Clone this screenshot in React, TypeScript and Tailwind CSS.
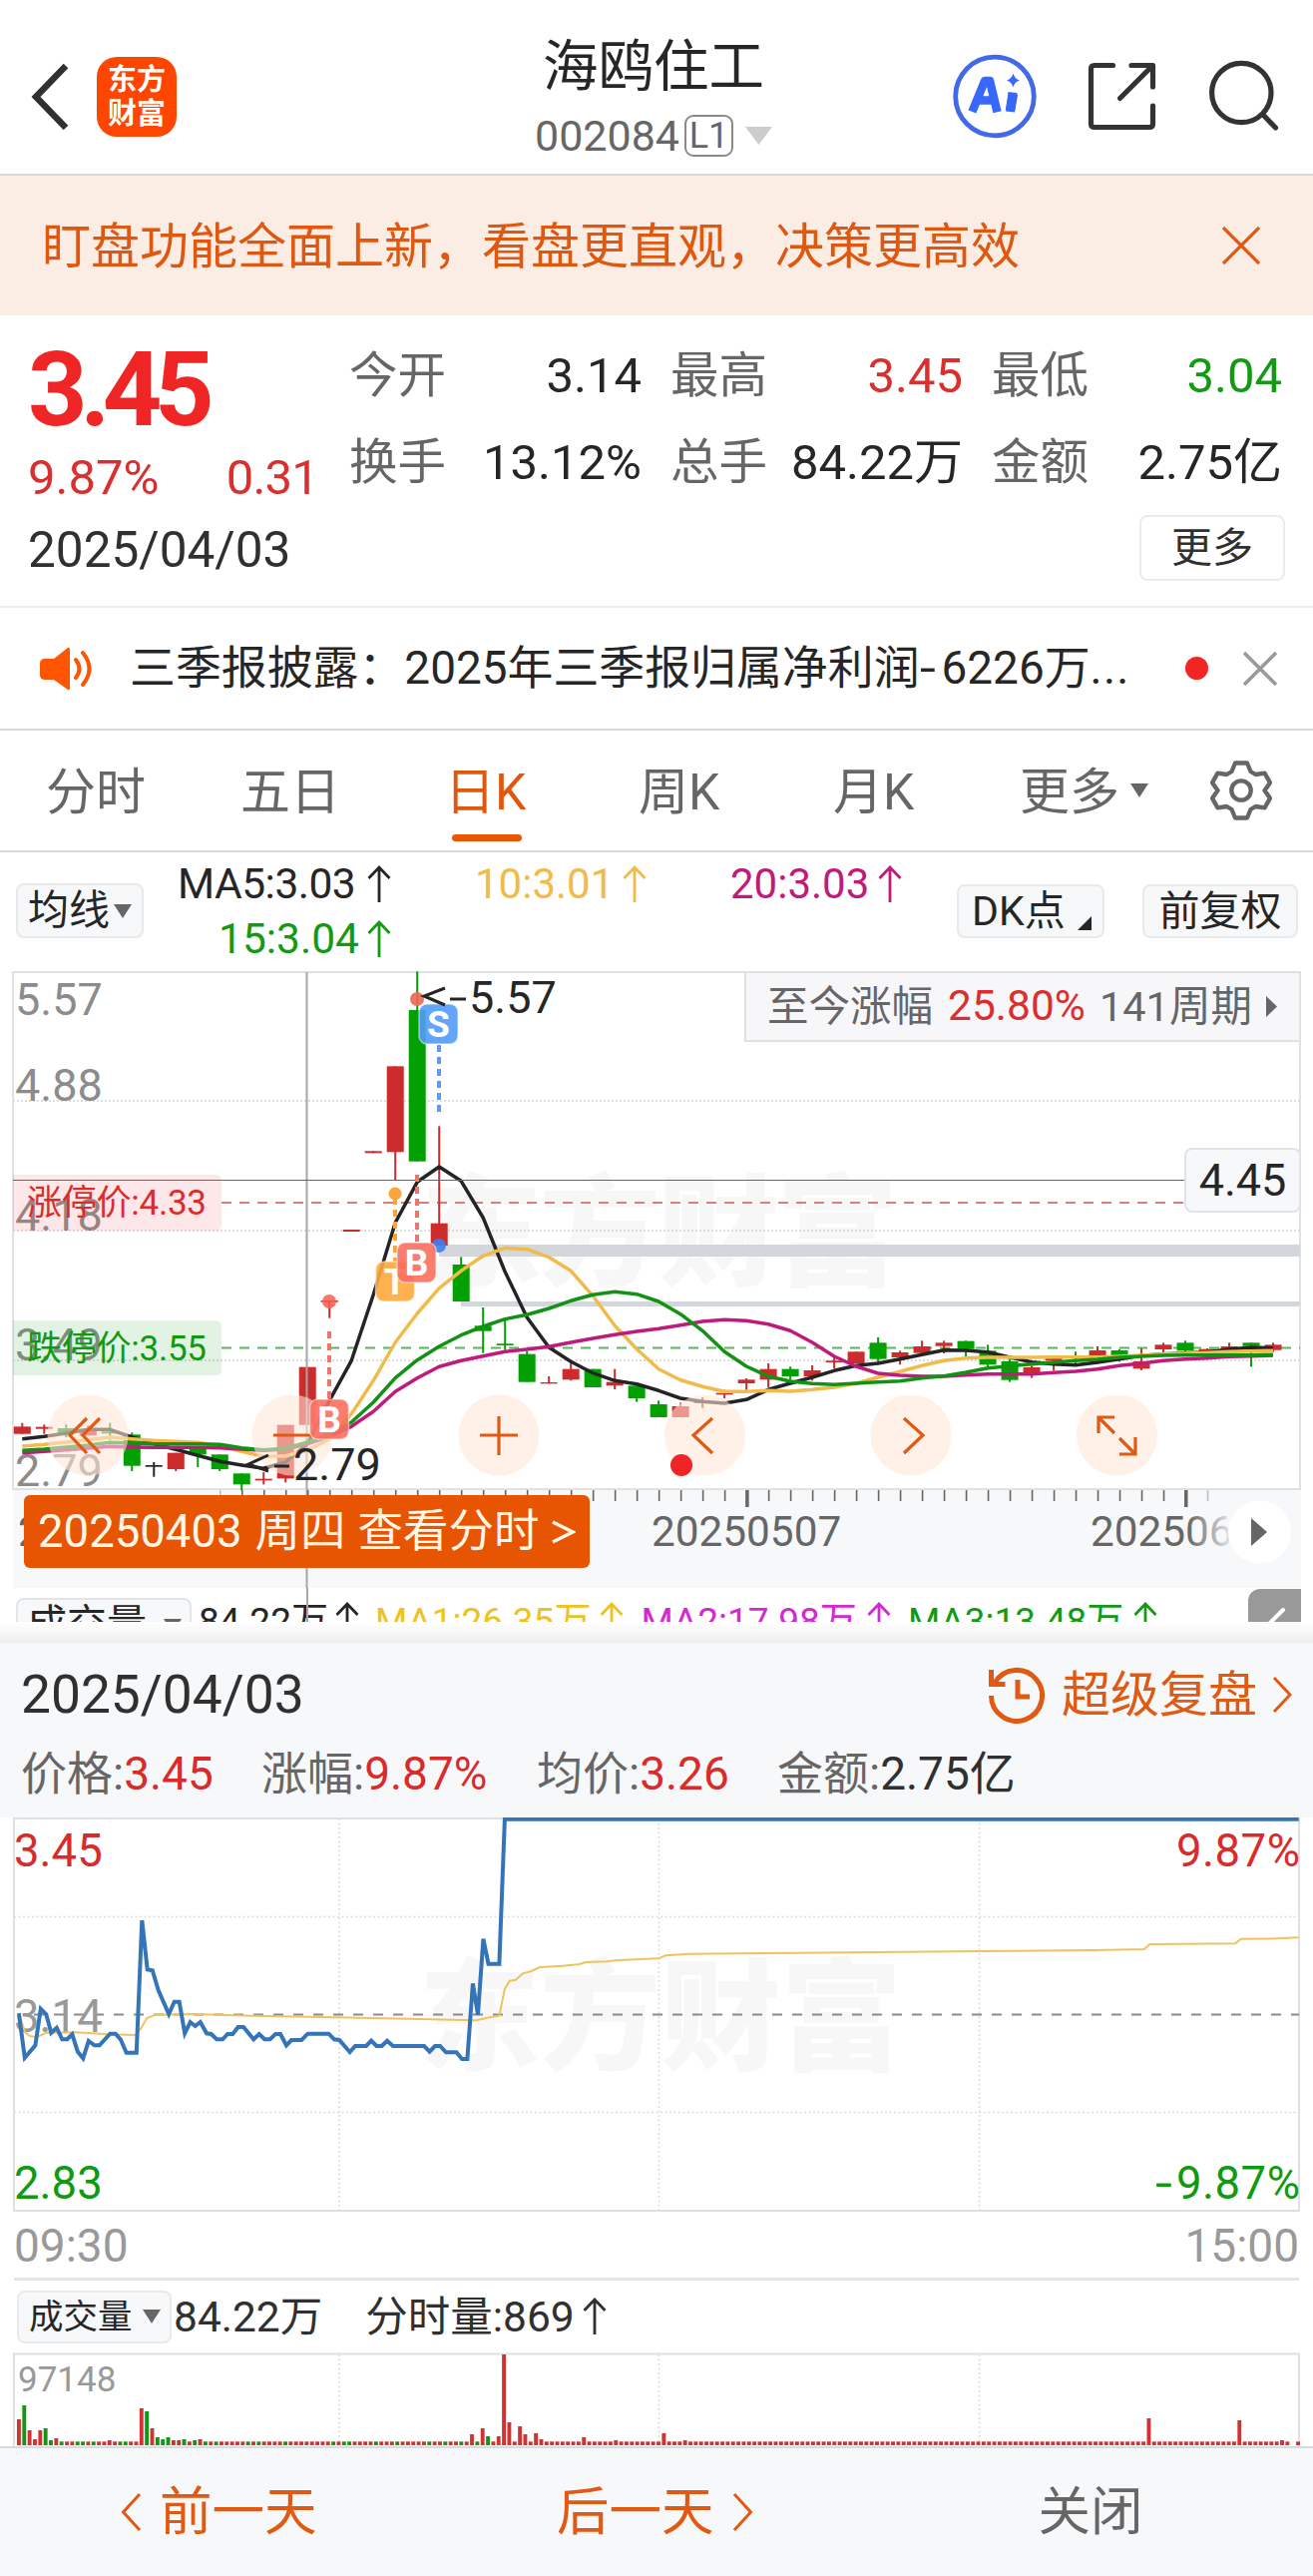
import React from 'react';

type Candle = [color: 'r' | 'g' | 'k', top: number, bottom: number, high: number, low: number];

const RED = '#cc2c2c';
const GREEN = '#02a002';
const ORANGE = '#e05a14';

const FIRST_X = 22.3;
const STEP = 21.995;
const candleX = (i: number) => FIRST_X + i * STEP;
// chart values are stored in thirds of a pixel below y = 1260
const toY = (v: number) => 1260 + v / 3;

const candles: Candle[] = [
  ['r', 508, 530, 497, 530], ['r', 509, 515, 502, 530], ['g', 513, 527, 502, 540], ['r', 515, 535, 505, 535],
  ['g', 523, 529, 497, 548], ['g', 532, 626, 526, 642], ['k', 624, 629, 615, 659], ['r', 587, 636, 587, 642],
  ['g', 575, 592, 575, 630], ['g', 592, 636, 592, 642], ['g', 649, 682, 649, 700], ['r', 665, 670, 645, 682],
  ['r', 503, 664, 503, 676], ['r', 329, 503, 329, 503], ['r', 129, 134, 129, 182], ['r', -84, -78, -84, -78],
  ['r', -320, -314, -320, -314], ['r', -575, -317, -575, -233], ['g', -744, -289, -860, -289], ['r', -103, -36, -395, -36],
  ['g', 21, 132, -2, 132], ['g', 205, 221, 150, 287], ['g', 259, 264, 180, 278], ['g', 290, 374, 282, 374],
  ['r', 375, 379, 357, 379], ['r', 335, 367, 317, 370], ['g', 335, 390, 335, 390], ['r', 374, 385, 335, 396],
  ['g', 385, 423, 378, 434], ['g', 441, 480, 430, 480], ['r', 447, 480, 436, 480], ['r', 432, 438, 420, 452],
  ['r', 407, 412, 398, 423], ['r', 367, 378, 363, 398], ['r', 335, 367, 318, 390], ['g', 335, 357, 328, 368],
  ['r', 339, 357, 324, 370], ['r', 310, 315, 298, 333], ['r', 283, 318, 283, 318], ['g', 256, 305, 240, 318],
  ['r', 285, 300, 280, 322], ['r', 267, 287, 250, 287], ['r', 256, 266, 250, 288], ['g', 251, 275, 250, 298],
  ['g', 280, 322, 262, 328], ['g', 312, 368, 305, 374], ['r', 330, 346, 325, 362], ['r', 297, 310, 297, 340],
  ['g', 296, 300, 283, 322], ['r', 279, 298, 267, 318], ['g', 279, 297, 275, 313], ['r', 312, 334, 273, 339],
  ['r', 262, 276, 256, 286], ['g', 256, 280, 250, 286], ['r', 275, 283, 273, 283], ['r', 267, 275, 256, 282],
  ['g', 256, 266, 256, 328], ['r', 262, 278, 256, 284],
];

const ma5 = [545, 538, 528, 517, 517, 540, 560, 577, 595, 613, 624, 634, 615, 560, 430, 310, 112, -105, -227, -273, -230, -120, 43, 180, 270, 313, 347, 370, 380, 400, 423, 433, 438, 427, 397, 378, 360, 340, 325, 318, 305, 292, 278, 279, 284, 300, 314, 320, 323, 315, 305, 295, 290, 287, 284, 276, 270, 272];
const ma10 = [567, 562, 555, 548, 540, 545, 550, 553, 556, 567, 583, 598, 596, 580, 545, 470, 370, 255, 168, 92, 40, -5, -29, -25, -1, 40, 115, 205, 275, 335, 368, 388, 403, 403, 400, 402, 397, 390, 378, 360, 343, 325, 310, 302, 300, 300, 300, 299, 299, 299, 297, 294, 290, 288, 286, 283, 281, 280];
const ma15 = [580, 576, 570, 564, 556, 558, 560, 560, 560, 562, 572, 578, 574, 555, 530, 495, 435, 362, 308, 267, 233, 207, 185, 172, 153, 130, 112, 103, 110, 132, 170, 220, 283, 327, 357, 372, 379, 382, 378, 374, 371, 362, 356, 345, 332, 326, 320, 315, 310, 306, 300, 297, 294, 293, 293, 293, 293, 292];
const ma20 = [587, 583, 578, 573, 568, 570, 571, 571, 571, 572, 576, 580, 576, 560, 538, 508, 463, 403, 362, 328, 310, 296, 283, 276, 268, 255, 243, 232, 222, 214, 203, 192, 187, 190, 200, 220, 255, 297, 327, 348, 354, 357, 357, 353, 350, 350, 350, 346, 342, 335, 325, 318, 310, 305, 302, 298, 296, 294];

const maPoints = (values: number[]) => values.map((v, i) => `${candleX(i).toFixed(1)},${toY(v).toFixed(1)}`).join(' ');

const pricePoints: [number, number][] = [
  [45, 622], [59, 755], [84, 718], [97, 608], [110, 625], [122, 680], [135, 665], [148, 700], [160, 700], [172, 685],
  [185, 737], [198, 757], [211, 705], [225, 718], [237, 718], [262, 683], [275, 683], [287, 700], [301, 740], [325, 740],
  [338, 342], [351, 490], [363, 493], [377, 552], [402, 624], [415, 587], [427, 587], [440, 682], [453, 648], [465, 660],
  [477, 648], [492, 682], [503, 684], [516, 700], [530, 700], [542, 684], [554, 684], [567, 663], [580, 663], [604, 700],
  [617, 684], [630, 700], [643, 700], [656, 684], [668, 684], [682, 718], [694, 702], [718, 702], [733, 683], [783, 683],
  [796, 700], [808, 702], [833, 738], [846, 720], [872, 720], [884, 704], [897, 720], [909, 720], [922, 704], [936, 720],
  [1010, 720], [1023, 737], [1036, 720], [1048, 720], [1062, 739], [1087, 739], [1100, 759], [1113, 759], [1126, 532],
  [1138, 626], [1151, 398], [1163, 473], [1189, 473], [1202, 38], [3093, 38],
];
const avgPoints: [number, number][] = [
  [45, 622], [60, 680], [72, 690], [85, 693], [98, 688], [110, 680], [180, 679], [250, 684], [322, 687], [335, 668],
  [350, 636], [370, 626], [460, 624], [600, 629], [800, 634], [1000, 639], [1135, 643], [1160, 635], [1189, 629],
  [1202, 548], [1214, 524], [1228, 521], [1245, 502], [1265, 495], [1285, 483], [1340, 479], [1380, 474], [1395, 468],
  [1445, 466], [1470, 462], [1568, 457], [1585, 448], [1640, 443], [1898, 440], [2332, 435], [2604, 432], [2725, 429],
  [2738, 414], [2942, 412], [2955, 398], [3038, 397], [3093, 394],
];
const intraday = (pts: [number, number][]) => pts.map(([x, y]) => `${(x / 2.376).toFixed(1)},${(1810 + y / 3).toFixed(1)}`).join(' ');

const volumeSpikes: Record<number, number> = {
  0: 26, 1: 40, 2: 15, 3: 6, 4: 15, 5: 17, 6: 5, 7: 7, 17: 5, 23: 37, 24: 34, 25: 17, 26: 8, 27: 6, 28: 8, 29: 5, 30: 5,
  31: 6, 33: 5, 34: 6, 85: 11, 87: 17, 88: 9, 90: 9, 91: 91, 92: 23, 94: 19, 95: 11, 97: 12, 98: 6, 106: 8, 112: 5,
  121: 12, 125: 5, 212: 27, 229: 25, 237: 5,
};
const greenVolumes = new Set([1, 5, 6, 8, 11, 12, 14, 19, 20, 24, 26, 27, 28, 31, 33, 35, 37, 43, 45, 50, 59, 61, 62, 67, 71, 77, 80, 83, 86, 88]);

function Up({ className = '' }: { className?: string }) {
  return (
    <svg className={`h-[38px] w-[24px] shrink-0 ${className}`} viewBox="0 0 24 38" fill="none" stroke="currentColor" strokeWidth="2.8">
      <path d="M12 37V2M1.5 13 12 2l10.500 11" />
    </svg>
  );
}

function Down({ className = '' }: { className?: string }) {
  return (
    <svg className={`h-[14px] w-[18px] shrink-0 ${className}`} viewBox="0 0 18 14" fill="currentColor">
      <path d="M0 0h18L9 14z" />
    </svg>
  );
}

function Header() {
  return (
    <header className="flex h-[176px] shrink-0 border-b-2 border-[#d9dadc]">
      <svg className="ml-[30px] mt-[62px] h-[70px] w-[42px]" viewBox="0 0 42 70" fill="none" stroke="#303030" strokeWidth="6.500">
        <path d="M36 4 6 35l30 31" />
      </svg>
      <div className="ml-[25px] mt-[57px] flex h-[80px] w-[80px] flex-col items-center justify-center rounded-[20px] bg-[#ff4600] text-[29px] font-bold leading-[34px] text-white">
        <span>东方</span>
        <span>财富</span>
      </div>
      <div className="ml-[300px] mt-[36px] flex w-[360px] flex-col items-center pr-[4px]">
        <div className="text-[55.5px] leading-[64px] text-[#262626]">海鸥住工</div>
        <div className="mt-[14px] flex h-[44px] items-center text-[#666]">
          <span className="text-[43px] leading-none">002084</span>
          <span className="ml-[5px] flex h-[42px] w-[49px] items-center justify-center rounded-[9px] border-2 border-[#8a8a8a] text-[36px] leading-none">L1</span>
          <svg className="ml-[12px] h-[18px] w-[27px]" viewBox="0 0 27 18" fill="#ccc"><path d="M0 0h27L13.500 18z" /></svg>
        </div>
      </div>
      <svg className="ml-[117px] mt-[54px] h-[85px] w-[85px]" viewBox="0 0 85 85" fill="none">
        <circle cx="43" cy="42.500" r="39.300" stroke="#4169e9" strokeWidth="4.800" />
        <g stroke="#3767fb" strokeLinejoin="round">
          <path d="M22 54 33 27h5l6.500 27M27 46.500h15" strokeWidth="8.500" strokeLinecap="square" />
          <path d="M61.500 40 58.500 56.500" strokeWidth="9.500" strokeLinecap="butt" />
          <path d="M61 38.500 58.500 58" strokeWidth="9" />
        </g>
        <path d="M61.500 19.500q1.500 5.500 6.500 7q-5 1.500-6.500 7q-1.500-5.500-6.500-7q5-1.500 6.500-7" fill="#3767fb" />
      </svg>
      <svg className="ml-[49px] mt-[60px] h-[72px] w-[72px]" viewBox="0 0 72 72" fill="none" stroke="#333" strokeWidth="5.200" strokeLinecap="round" strokeLinejoin="round">
        <path d="M27.500 5.500H9q-3.500 0-3.500 3.500v55q0 3.500 3.500 3.500h55q3.500 0 3.500-3.500V46M46 5.500h21.500V27M66 7 34.500 38.500" />
      </svg>
      <svg className="ml-[49px] mt-[58px] h-[76px] w-[76px]" viewBox="0 0 76 76" fill="none" stroke="#333" strokeWidth="5.200" strokeLinecap="round">
        <circle cx="35.300" cy="35" r="29.700" />
        <path d="m56.500 56.500 13 13.500" />
      </svg>
    </header>
  );
}

function Banner() {
  return (
    <div className="flex h-[140px] shrink-0 items-center bg-[#fcede4] pl-[42px] pr-[53px] text-[#e0570f]">
      <span className="pt-[2px] text-[49px] leading-none">盯盘功能全面上新，看盘更直观，决策更高效</span>
      <svg className="ml-auto h-[38px] w-[38px]" viewBox="0 0 38 38" fill="none" stroke="currentColor" strokeWidth="3.200"><path d="m1 1 36 36M37 1 1 37" /></svg>
    </div>
  );
}

function Stat({ label, value, tone = 'text-[#262626]' }: { label: string; value: string; tone?: string }) {
  return (
    <div className="flex h-[54px] items-center justify-between leading-[54px]">
      <span className="text-[48.500px] text-[#666]">{label}</span>
      <span className={`text-[49px] ${tone}`}>{value}</span>
    </div>
  );
}

function Quote() {
  return (
    <section className="flex h-[293px] shrink-0 flex-col border-b-2 border-[#ececee]">
      <div className="flex h-[191px]">
        <div className="ml-[28px] w-[322px]">
          <div className="mt-[22px] text-[104px] font-bold leading-[105px] tracking-[-7.500px] text-[#f02626]">3.45</div>
          <div className="mt-[11px] flex justify-between pr-[31px] text-[49px] leading-[50px] text-[#d9302f]">
            <span>9.87%</span>
            <span className="tracking-[-0.8px]">0.31</span>
          </div>
        </div>
        <div className="grid h-[175px] grid-cols-[293px_293px_291px] content-between gap-x-[29px] pt-[34px]">
          <Stat label="今开" value="3.14" />
          <Stat label="最高" value="3.45" tone="text-[#d9302f]" />
          <Stat label="最低" value="3.04" tone="text-[#129a12]" />
          <Stat label="换手" value="13.12%" />
          <Stat label="总手" value="84.22万" />
          <Stat label="金额" value="2.75亿" />
        </div>
      </div>
      <div className="flex h-[84px] items-center justify-between pl-[28px] pr-[28px]">
        <span className="pt-[5px] text-[49.500px] leading-none text-[#303030]">2025/04/03</span>
        <button className="flex h-[66px] w-[146px] items-center justify-center rounded-[8px] border-2 border-[#ebebed] text-[41px] leading-none text-[#303030]">更多</button>
      </div>
    </section>
  );
}

function News() {
  return (
    <section className="flex h-[123px] shrink-0 items-center border-b-2 border-[#d9dadc] text-[#262626]">
      <svg className="ml-[39px] h-[44px] w-[54px]" viewBox="0 0 54 44" fill="#ff5500">
        <path d="M6 12h9L29 1q2-1 2 2v38q0 3-2 2L15 33H6q-5 0-5-5V17q0-5 5-5" />
        <path d="M37 13q7 9 0 18M44 6q13 16 0 32" fill="none" stroke="#ff5500" strokeWidth="4" strokeLinecap="round" />
      </svg>
      <span className="ml-[37px] w-[1002px] whitespace-nowrap text-[45.900px] leading-none">三季报披露：2025年三季报归属净利润<span className="inline-block w-[22px] origin-left scale-x-125">-</span>6226万<span className="tracking-[1.200px]">...</span></span>
      <span className="ml-[56px] h-[23px] w-[23px] rounded-full bg-[#f22424]" />
      <svg className="ml-[35px] h-[34px] w-[34px]" viewBox="0 0 34 34" fill="none" stroke="#999" strokeWidth="3.500"><path d="m1 1 32 32M33 1 1 33" /></svg>
    </section>
  );
}

function Tabs() {
  return (
    <nav className="flex h-[122px] shrink-0 items-center border-b-2 border-[#d9dadc] text-[50px] leading-[50px] text-[#666]">
      <span className="ml-[46px] w-[195px] pt-[4px]">分时</span>
      <span className="w-[205px] pt-[4px]">五日</span>
      <span className="relative w-[194px] pt-[4px] text-[#e0570f]">
        日K
        <i className="absolute left-[7px] top-[71px] h-[7px] w-[70px] rounded-full bg-[#e85606]" />
      </span>
      <span className="w-[195px] pt-[4px]">周K</span>
      <span className="w-[187px] pt-[4px]">月K</span>
      <span className="w-[111px] pt-[4px]">更多</span>
      <Down />
      <svg className="ml-[62px] h-[60px] w-[62px]" viewBox="0 0 62 60" fill="none" stroke="#666" strokeWidth="4.300" strokeLinejoin="round">
        <path d="M25 2.500h12l3.500 8.500 5 3 9-1.300 5.500 9.500-5.500 7.800 5.500 7.800-5.500 9.500-9-1.300-5 3L37 57.500H25L21.500 49l-5-3-9 1.300L2 37.800 7.500 30 2 22.200l5.500-9.500 9 1.300 5-3z" />
        <circle cx="31" cy="30" r="9.700" />
      </svg>
    </nav>
  );
}

function Indicators() {
  return (
    <section className="flex h-[119px] shrink-0 text-[#262626]">
      <button className="ml-[16px] mt-[31px] flex h-[55px] w-[128px] items-center rounded-[8px] border-2 border-[#e8e9eb] bg-[#f7f8fa] pl-[10px] text-[41px] leading-none">
        均线<Down className="ml-[4px] text-[#666]" />
      </button>
      <div className="ml-[34px] mt-[4px] w-[254px] text-[42.500px] leading-[55px]">
        <div className="flex w-[214px] items-center justify-between"><span className="tracking-[-0.5px]">MA5:3.03</span><Up /></div>
        <div className="flex w-[214px] items-center justify-between pl-[41px] text-[#129a12]"><span>15:3.04</span><Up /></div>
      </div>
      <div className="mt-[4px] flex h-[55px] w-[254px] items-center pl-[44px] text-[42px] text-[#f1bb4c]"><span>10:3.01</span><Up className="ml-[9px]" /></div>
      <div className="mt-[4px] flex h-[55px] w-[273px] items-center pl-[46px] text-[42px] text-[#c01b7c]"><span>20:3.03</span><Up className="ml-[9px]" /></div>
      <button className="mt-[32px] flex h-[54px] w-[148px] items-center rounded-[8px] border-2 border-[#e8e9eb] bg-[#f7f8fa] pl-[13px] text-[41px] leading-none">
        DK点
        <svg className="ml-[12px] mt-[24px] h-[14px] w-[14px]" viewBox="0 0 14 14"><path d="M14 0v14H0z" fill="#262626" /></svg>
      </button>
      <button className="ml-[38px] mt-[32px] flex h-[54px] w-[156px] items-center justify-center rounded-[8px] border-2 border-[#e8e9eb] bg-[#f7f8fa] text-[41px] leading-none">前复权</button>
    </section>
  );
}

function Badge({ x, y, fill, letter }: { x: number; y: number; fill: string; letter: string }) {
  return (
    <g>
      <rect x={x} y={y} width="39" height="40" rx="8" fill={fill} fillOpacity="0.9" stroke="#fff" strokeOpacity="0.5" strokeWidth="1.500" />
      <text x={x + 19.5} y={y + 33} textAnchor="middle" fontSize="37" fontWeight="700" fill="#fff">{letter}</text>
    </g>
  );
}

function RoundButtons() {
  return (
    <g fill="none" stroke={ORANGE} strokeWidth="3.200">
      {[88, 293, 500, 706.5, 913, 1119.5].map((cx) => <circle key={cx} cx={cx} cy="1438" r="40.500" fill="#ffe6d8" fillOpacity="0.58" stroke="none" />)}
      <path d="M87 1421 70 1438l17 18M100 1421l-17 17 17 18" />
      <path d="M274 1438h38M481 1438h38M500 1419v39" />
      <path d="M714 1421 695 1438l19 18M906 1421l19 17-19 18" />
      <path d="M1117 1420h-16v16M1102 1421l15 15M1138 1440v17h-16M1137 1456l-15-15" />
    </g>
  );
}

function KLineChart() {
  return (
    <div className="relative h-[618px] shrink-0">
      <svg className="block h-[618px] w-[1316px]" viewBox="0 973 1316 618">
        <rect x="13" y="1492" width="1291" height="99" fill="#f7f8fa" />
        <text x="422" y="1278" fontSize="121" fontWeight="900" fill="#f7f7f7" textLength="478">东方财富</text>
        <g stroke="#dcdcdc" strokeWidth="2" strokeDasharray="2 2">
          <path d="M13 1103H1303M13 1233H1303M13 1363H1303" />
        </g>
        <rect x="13" y="974" width="1290" height="518" fill="none" stroke="#e0e1e3" strokeWidth="2" />
        <rect x="440" y="1247" width="863" height="12" fill="#d3d7dc" />
        <rect x="462" y="1304" width="841" height="5" fill="#d3d7dc" />
        <g fill="#8c8c8c" fontSize="45">
          <text x="15" y="1017">5.57</text>
          <text x="15" y="1103">4.88</text>
          <text x="15" y="1233">4.18</text>
          <text x="15" y="1363">3.49</text>
          <text x="15" y="1489">2.79</text>
        </g>
        <path d="M222 1205H1212" stroke="#dc7f7c" strokeWidth="2" strokeDasharray="10 8" />
        <path d="M222 1350.500H1303" stroke="#5cb65c" strokeWidth="2" strokeDasharray="10 8" />

        {candles.map(([c, top, bottom, high, low], i) => {
          const color = c === 'r' ? RED : c === 'g' ? GREEN : '#262626';
          return (
            <g key={i} fill={color}>
              <rect x={candleX(i) - 1} y={toY(high)} width="2" height={toY(low) - toY(high)} />
              <rect x={candleX(i) - 8.500} y={toY(top)} width="17" height={toY(bottom) - toY(top)} />
            </g>
          );
        })}
        <path d="M307.500 974V1591" stroke="#a6a6a6" strokeWidth="2" />
        <g fill="none" strokeWidth="3.500" strokeLinejoin="round">
          <polyline points={maPoints(ma5)} stroke="#242424" />
          <polyline points={maPoints(ma10)} stroke="#f1bb4c" />
          <polyline points={maPoints(ma20)} stroke="#c01b7c" />
          <polyline points={maPoints(ma15)} stroke="#129212" />
        </g>
        <path d="M13 1182.500H1212" stroke="#666" strokeWidth="1" />

        <path d="M13 1177h203q6 0 6 6v44q0 6-6 6H13z" fill="#f5474b" fillOpacity="0.13" />
        <path d="M13 1323h203q6 0 6 6v43q0 6-6 6H13z" fill="#13a023" fillOpacity="0.12" />
        <text x="27" y="1217" fontSize="35" fill="#db2c2c" textLength="180">涨停价:4.33</text>
        <text x="27" y="1363" fontSize="35" fill="#109a10" textLength="180">跌停价:3.55</text>

        <g fill="none" strokeWidth="4" strokeDasharray="7 5">
          <path d="M440 1047V1114" stroke="#5b9cf0" />
          <path d="M418 1177V1245" stroke="#ef7568" />
          <path d="M396 1200V1264" stroke="#f7a53c" />
          <path d="M330 1334V1402" stroke="#ef7568" />
        </g>
        <circle cx="418" cy="1001" r="7" fill="#ef6656" fillOpacity="0.9" />
        <circle cx="396" cy="1196" r="6.500" fill="#fca53a" />
        <circle cx="440" cy="1248" r="7" fill="#3c80f0" fillOpacity="0.9" />
        <circle cx="330" cy="1304" r="7" fill="#f7604f" fillOpacity="0.85" />
        <RoundButtons />
        <Badge x={376.5} y={1264} fill="#ffa83d" letter="T" />
        <Badge x={398} y={1245} fill="#fb6f5f" letter="B" />
        <Badge x={310.5} y={1402} fill="#fb6f5f" letter="B" />
        <Badge x={420} y={1006} fill="#529bfb" letter="S" />

        <g fill="none" stroke="#262626" strokeWidth="3">
          <path d="M446 990 425 998l21 9M451 1001h16" />
          <path d="M269 1458 249 1467l20 7M275 1469h15" />
        </g>
        <g fill="#262626" fontSize="45">
          <text x="470" y="1015">5.57</text>
          <text x="294" y="1483">2.79</text>
        </g>
        <circle cx="683" cy="1468" r="11" fill="#f02424" />

        <g fill="#666">
          {Array.from({ length: 46 }, (_, k) => {
            const i = k + 9;
            const major = i === 33 || i === 53;
            return <rect key={i} x={candleX(i) - (major ? 1 : 0.300)} y="1493" width={major ? 3.5 : 1.600} height={major ? 17 : 11} opacity={i === 54 || i === 9 ? 0.400 : 1} />;
          })}
          <text x="18" y="1549" fontSize="42">2</text>
          <text x="653" y="1549" fontSize="42.300">20250507</text>
          <text x="1093" y="1549" fontSize="42.300">202506</text>
        </g>
        <defs>
          <linearGradient id="axis-fade"><stop offset="0" stopColor="#f7f8fa" stopOpacity="0" /><stop offset="1" stopColor="#f7f8fa" /></linearGradient>
        </defs>
        <rect x="1190" y="1512" width="50" height="50" fill="url(#axis-fade)" />
        <circle cx="1262.500" cy="1535" r="31.500" fill="#fff" />
        <path d="M1254 1521v28l16-14z" fill="#666" />
      </svg>
      <div className="absolute right-[12px] top-0 flex h-[71px] w-[558px] items-center border-2 border-[#e0e1e3] bg-[#f7f7fa] pl-[21px] text-[41.500px] leading-none text-[#666]">
        <span>至今涨幅</span>
        <span className="ml-[15px] text-[42.500px] text-[#d9302f]">25.80%</span>
        <span className="ml-[14px]">141周期</span>
        <svg className="ml-[14px] h-[21px] w-[11px]" viewBox="0 0 11 21"><path d="M0 0v21l11-10.500z" fill="#666" /></svg>
      </div>
      <div className="absolute right-[12px] top-[177px] flex h-[65px] w-[117px] items-center justify-center rounded-[8px] border-2 border-[#e0e4e8] bg-[#f7f8fa] text-[45px] leading-none text-[#262626]">4.45</div>
      <button className="absolute left-[24px] top-[525px] flex h-[73px] w-[567px] items-center rounded-[6px] bg-[#e85502] pl-[14px] text-[45.500px] leading-none text-[#fff6e6]">
        <span>20250403</span>
        <span className="ml-[13px]">周四</span>
        <span className="ml-[12px]">查看分时</span>
        <svg className="ml-[12px] h-[24px] w-[24px]" viewBox="0 0 24 24" fill="none" stroke="currentColor" strokeWidth="3.500"><path d="m1 2 20 10L1 22" /></svg>
      </button>
    </div>
  );
}

function VolumeHeader() {
  return (
    <div className="relative h-[34px] shrink-0 overflow-hidden">
      <div className="flex h-[56px] items-start text-[37px] leading-[44px]">
        <button className="ml-[16px] mt-[10px] flex h-[56px] w-[176px] items-start rounded-[8px] border-2 border-[#e2e4e6] bg-[#f7f8fa] pl-[9px] text-[40px] leading-[46px] text-[#262626]">
          <span className="pt-[2px]">成交量</span><Down className="ml-[17px] mt-[19px] text-[#666]" />
        </button>
        <span className="ml-[7px] mt-[12px] text-[#262626]">84.22万</span>
        <Up className="ml-[7px] mt-[14px] text-[#262626]" />
        <span className="ml-[16px] mt-[12px] text-[#efc31f]">MA1:26.35万</span>
        <Up className="ml-[9px] mt-[14px] text-[#efc31f]" />
        <span className="ml-[17px] mt-[12px] text-[#d229d2]">MA2:17.98万</span>
        <Up className="ml-[10px] mt-[14px] text-[#d229d2]" />
        <span className="ml-[17px] mt-[12px] text-[#129a12]">MA3:13.48万</span>
        <Up className="ml-[10px] mt-[14px] text-[#129a12]" />
      </div>
      <div className="absolute right-[12px] top-[1px] h-[40px] w-[53px] rounded-tl-[12px] bg-[#999]">
        <svg className="ml-[20px] mt-[18px] h-[30px] w-[20px]" viewBox="0 0 20 30" fill="none" stroke="#fff" strokeWidth="4" strokeLinecap="round"><path d="M15 3 2 16" /></svg>
      </div>
      <i className="absolute left-[307px] top-0 h-[34px] w-[2px] bg-[#a6a6a6]" />
    </div>
  );
}

function ReplayHeader() {
  return (
    <section className="h-[175px] shrink-0 bg-[#f7f8fa]">
      <div className="flex h-[104px] items-center pl-[21px] pr-[21px]">
        <span className="pt-[2px] text-[53.300px] leading-none text-[#303030]">2025/04/03</span>
        <svg className="ml-auto h-[58px] w-[60px]" viewBox="0 0 60 58" fill="none" stroke={ORANGE} strokeWidth="5">
          <path d="M9 17A25.500 25.500 0 1 1 5.500 30M5.500 4v14.500h14M32 14v17h12" />
        </svg>
        <span className="ml-[16px] text-[49px] leading-none text-[#e05a14]">超级复盘</span>
        <svg className="ml-[15px] h-[36px] w-[20px]" viewBox="0 0 20 36" fill="none" stroke={ORANGE} strokeWidth="3"><path d="m2 1 16 17L2 35" /></svg>
      </div>
      <div className="flex h-[54px] items-center text-[46px] leading-none text-[#d92b2b]">
        <span className="ml-[21px] w-[241px]"><b className="font-normal text-[#666]">价格:</b>3.45</span>
        <span className="w-[276px]"><b className="font-normal text-[#666]">涨幅:</b>9.87%</span>
        <span className="w-[241px]"><b className="font-normal text-[#666]">均价:</b>3.26</span>
        <span className="text-[#303030]"><b className="font-normal text-[#666]">金额:</b>2.75亿</span>
      </div>
    </section>
  );
}

function IntradayChart() {
  return (
    <svg className="block h-[395px] w-[1316px] shrink-0" viewBox="0 1821 1316 395">
      <text x="420" y="2064" fontSize="121" fontWeight="900" fill="#f7f7f7" textLength="484">东方财富</text>
      <g stroke="#dcdcdc" strokeWidth="1.500" strokeDasharray="2 2.500">
        <path d="M14 1920.500H1302M14 2116.500H1302M340 1822V2214M660.500 1822V2214M981.500 1822V2214" />
      </g>
      <rect x="14" y="1822" width="1288" height="393" fill="none" stroke="#dfe0e2" strokeWidth="2" />
      <path d="M34 2018.500H1302" stroke="#8a8a8a" strokeWidth="2" strokeDasharray="10 10" />
      <text x="14" y="2036" fontSize="45.500" fill="#999">3.14</text>
      <polyline points={intraday(avgPoints)} fill="none" stroke="#eec35f" strokeWidth="2" />
      <polyline points={intraday(pricePoints)} fill="none" stroke="#3474b8" strokeWidth="4" />
      <g fontSize="45.500">
        <text x="14" y="1870" fill="#d92b2b">3.45</text>
        <text x="1303" y="1870" textAnchor="end" fill="#d92b2b" textLength="124">9.87%</text>
        <text x="14" y="2203" fill="#109a10">2.83</text>
        <text x="1303" y="2203" textAnchor="end" fill="#109a10" textLength="124">9.87%</text>
        <text transform="translate(1158 2203) scale(1.35 1)" fill="#109a10">-</text>
      </g>
    </svg>
  );
}

function VolumeChart() {
  return (
    <svg className="block h-[94px] w-[1316px] shrink-0" viewBox="0 2357 1316 94">
      <path d="M340 2359V2450M660.500 2359V2450M981.500 2359V2450" stroke="#dcdcdc" strokeWidth="1.500" strokeDasharray="2 2.500" />
      <path d="M14 2451V2358.500H1302V2451" fill="none" stroke="#dfe0e2" strokeWidth="2" />
      <text x="18" y="2396" fontSize="35" fill="#999">97148</text>
      {Array.from({ length: 241 }, (_, i) => {
        const h = volumeSpikes[i] ?? 3.700;
        return i === 239 ? null : <rect key={i} x={17 + i * 5.342} y={2450 - h} width="3.900" height={h} fill={greenVolumes.has(i) ? '#159415' : '#d43232'} />;
      })}
    </svg>
  );
}

function Footer() {
  return (
    <footer className="flex h-[130px] shrink-0 items-center border-t-2 border-[#d9dadc] bg-[#f7f8fa] text-[52.500px] leading-none text-[#e05a14]">
      <svg className="ml-[121px] h-[38px] w-[21px]" viewBox="0 0 21 38" fill="none" stroke="currentColor" strokeWidth="3"><path d="M19 1 2.500 19 19 37" /></svg>
      <span className="ml-[18px] w-[398px]">前一天</span>
      <span>后一天</span>
      <svg className="ml-[18px] h-[38px] w-[21px]" viewBox="0 0 21 38" fill="none" stroke="currentColor" strokeWidth="3"><path d="m2 1 16.500 18L2 37" /></svg>
      <span className="ml-[286px] text-[#666]">关闭</span>
    </footer>
  );
}

export default function App() {
  return (
    <main className="flex h-[2581px] w-[1316px] flex-col overflow-hidden bg-white font-['Roboto','Noto_Sans_CJK_SC',sans-serif]">
      <Header />
      <Banner />
      <Quote />
      <News />
      <Tabs />
      <Indicators />
      <KLineChart />
      <VolumeHeader />
      <div className="h-[21px] shrink-0 bg-linear-to-b from-white to-[#eeeeef]" />
      <ReplayHeader />
      <IntradayChart />
      <div className="mx-[14px] flex h-[69px] shrink-0 items-center justify-between border-b-[3px] border-[#e4e5e7] pt-[2px] text-[46px] leading-none text-[#999]">
        <span>09:30</span>
        <span>15:00</span>
      </div>
      <div className="flex h-[72px] shrink-0 items-center text-[42.500px] leading-none text-[#303030]">
        <button className="ml-[17px] flex h-[53px] w-[155px] items-center rounded-[8px] border-2 border-[#e8e9eb] bg-[#f7f8fa] pl-[10px] text-[34.500px] leading-none text-[#262626]">
          成交量<Down className="ml-[10px] text-[#666]" />
        </button>
        <span className="ml-[2px] pt-[2px]">84.22万</span>
        <span className="ml-[43px] pt-[2px]">分时量:869</span>
        <Up className="ml-[8px]" />
      </div>
      <VolumeChart />
      <Footer />
    </main>
  );
}
